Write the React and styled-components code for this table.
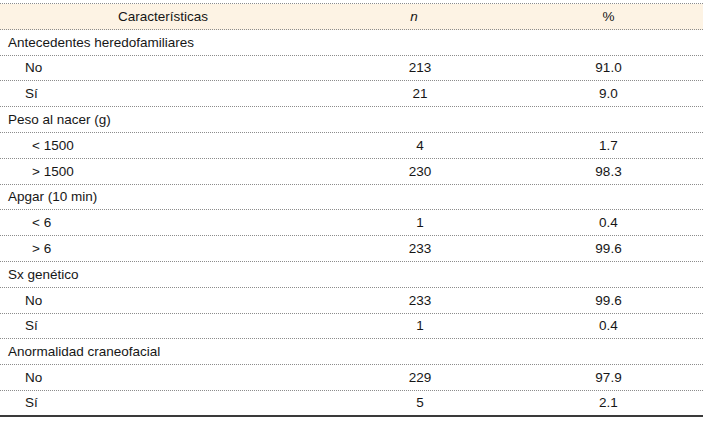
import React from 'react';
import styled, { createGlobalStyle } from 'styled-components';

const GlobalStyle = createGlobalStyle`
  body {
    margin: 0;
    background: #fff;
    font-family: 'Liberation Sans', Arial, sans-serif;
  }
`;

const Wrap = styled.div`
  padding-top: 3px;
  width: 703px;
`;

const Table = styled.div`
  border-top: 1px dotted #8c8c8c;
  color: #161616;
  font-size: 13.5px;
`;

const Row = styled.div`
  display: grid;
  grid-template-columns: 326px 188px 189px;
  align-items: center;
  height: 25.8px;
  box-sizing: border-box;
  border-bottom: ${(p) => (p.last ? '2px solid #3a3a3a' : '1px dotted #8c8c8c')};
  background: ${(p) => (p.head ? '#fdf3e4' : 'transparent')};
`;

const Label = styled.div`
  padding-left: ${(p) => p.indent}px;
  text-align: ${(p) => (p.center ? 'center' : 'left')};
  white-space: nowrap;
`;

const Num = styled.div`
  text-align: center;
  font-style: ${(p) => (p.italic ? 'italic' : 'normal')};
  padding-right: ${(p) => p.shift || 0}px;
`;

const rows = [
  { label: 'Antecedentes heredofamiliares', group: true },
  { label: 'No', n: '213', pct: '91.0' },
  { label: 'Sí', n: '21', pct: '9.0' },
  { label: 'Peso al nacer (g)', group: true },
  { label: '< 1500', n: '4', pct: '1.7', deep: true },
  { label: '> 1500', n: '230', pct: '98.3', deep: true },
  { label: 'Apgar (10 min)', group: true },
  { label: '< 6', n: '1', pct: '0.4', deep: true },
  { label: '> 6', n: '233', pct: '99.6', deep: true },
  { label: 'Sx genético', group: true },
  { label: 'No', n: '233', pct: '99.6' },
  { label: 'Sí', n: '1', pct: '0.4' },
  { label: 'Anormalidad craneofacial', group: true },
  { label: 'No', n: '229', pct: '97.9' },
  { label: 'Sí', n: '5', pct: '2.1' },
];

export default function App() {
  return (
    <>
      <GlobalStyle />
      <Wrap>
        <Table>
          <Row head>
            <Label center indent={0}>Características</Label>
            <Num italic shift={12}>n</Num>
            <Num>%</Num>
          </Row>
          {rows.map((r, i) => (
            <Row key={i} last={i === rows.length - 1}>
              <Label indent={r.group ? 8 : r.deep ? 32 : 25}>{r.label}</Label>
              <Num>{r.n}</Num>
              <Num>{r.pct}</Num>
            </Row>
          ))}
        </Table>
      </Wrap>
    </>
  );
}
